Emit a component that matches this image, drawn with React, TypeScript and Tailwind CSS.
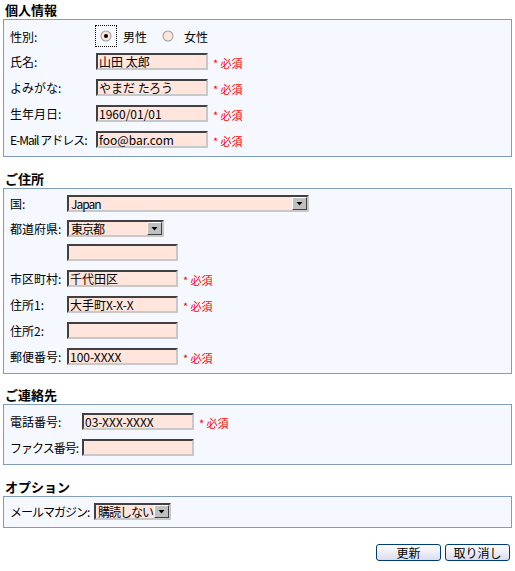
import React from 'react';

const FONT = "font-['Noto_Sans_CJK_JP','Noto_Sans',sans-serif]";

const fieldBase =
  'box-border h-[17px] border-2 border-t-[#404040] border-l-[#404040] border-r-[#c8c8c8] border-b-[#c8c8c8] bg-[#ffe5dc] text-[12px] leading-[13px] text-black';

const Field: React.FC<{ value?: string; w: string }> = ({ value = '', w }) => (
  <div className={`${fieldBase} ${w} whitespace-nowrap pl-px`}>{value}</div>
);

const Select: React.FC<{ value: string; w: string }> = ({ value, w }) => (
  <div className={`${fieldBase} ${w} flex items-start justify-between`}>
    <span className="whitespace-nowrap pl-[2px] tracking-[-1px]">{value}</span>
    <span className="box-border flex h-[13px] w-[15px] shrink-0 items-center justify-center border border-t-white border-l-white border-r-[#404040] border-b-[#404040] bg-[#c0c0c0]">
      <svg width="7" height="4" viewBox="0 0 7 4">
        <path d="M0.5 0h6L3.5 3.5z" fill="#000" />
      </svg>
    </span>
  </div>
);

const Required = () => (
  <span className="ml-[5px] mt-[4px] whitespace-nowrap text-[11px] leading-[13px] text-[#ff0000]">* 必須</span>
);

const Radio: React.FC<{ checked?: boolean }> = ({ checked }) => (
  <svg width="12" height="12" viewBox="0 0 12 12">
    <circle cx="6" cy="6" r="5.5" fill="#9a9a9a" />
    <circle cx="6" cy="6" r="4.5" fill="#fbe6dc" />
    {checked && <circle cx="6" cy="6" r="2" fill="#000" />}
  </svg>
);

const Heading: React.FC<{ children: React.ReactNode }> = ({ children }) => (
  <div className="h-[18px] pl-[5px] text-[13px] font-bold leading-[18px] text-black">{children}</div>
);

const Box: React.FC<{ children: React.ReactNode; className?: string }> = ({ children, className = '' }) => (
  <div className={`mx-[3px] flex flex-col border border-[#7f9db9] bg-[#f5f9ff] pl-[6px] ${className}`}>{children}</div>
);

const Row: React.FC<{ label: string; lw: string; tight?: boolean; children: React.ReactNode; className?: string }> = ({
  label,
  lw,
  tight,
  children,
  className = '',
}) => (
  <div className={`flex items-start ${className}`}>
    <div
      className={`${lw} shrink-0 whitespace-nowrap text-[12px] leading-[17px] text-black ${
        tight ? 'tracking-[-1px]' : ''
      }`}
    >
      {label}
    </div>
    {children}
  </div>
);

export default function App() {
  return (
    <div className={`${FONT} w-[515px] bg-white pt-[1px] text-black`}>
      {/* 個人情報 */}
      <Heading>個人情報</Heading>
      <Box className="pt-[5px] pb-[8px]">
        <div className="flex h-[22px] items-center">
          <div className="w-[85px] shrink-0 text-[12px] leading-[17px]">性別:</div>
          <div className="flex h-[22px] w-[22px] items-center justify-center border border-dotted border-black">
            <Radio checked />
          </div>
          <span className="ml-[6px] text-[12px] leading-[17px]">男性</span>
          <span className="ml-[15px] flex items-center">
            <Radio />
          </span>
          <span className="ml-[10px] text-[12px] leading-[17px]">女性</span>
        </div>
        <Row label="氏名:" lw="w-[86px]" className="mt-[6px]">
          <Field value="山田 太郎" w="w-[112px]" />
          <Required />
        </Row>
        <Row label="よみがな:" lw="w-[86px]" className="mt-[9px]">
          <Field value="やまだ たろう" w="w-[112px]" />
          <Required />
        </Row>
        <Row label="生年月日:" lw="w-[86px]" className="mt-[9px]">
          <Field value="1960/01/01" w="w-[112px]" />
          <Required />
        </Row>
        <Row label="E-Mail アドレス:" lw="w-[86px]" tight className="mt-[9px]">
          <Field value="foo@bar.com" w="w-[112px]" />
          <Required />
        </Row>
      </Box>

      {/* ご住所 */}
      <div className="mt-[13px]">
        <Heading>ご住所</Heading>
      </div>
      <Box className="pt-[6px] pb-[8px]">
        <Row label="国:" lw="w-[57px]">
          <Select value="Japan" w="w-[242px]" />
        </Row>
        <Row label="都道府県:" lw="w-[57px]" className="mt-[8px]">
          <Select value="東京都" w="w-[97px]" />
        </Row>
        <Row label="" lw="w-[57px]" className="mt-[7px]">
          <Field w="w-[111px]" />
        </Row>
        <Row label="市区町村:" lw="w-[57px]" className="mt-[9px]">
          <Field value="千代田区" w="w-[111px]" />
          <Required />
        </Row>
        <Row label="住所1:" lw="w-[57px]" className="mt-[9px]">
          <Field value="大手町X-X-X" w="w-[111px]" />
          <Required />
        </Row>
        <Row label="住所2:" lw="w-[57px]" className="mt-[9px]">
          <Field w="w-[111px]" />
        </Row>
        <Row label="郵便番号:" lw="w-[57px]" className="mt-[9px]">
          <Field value="100-XXXX" w="w-[111px]" />
          <Required />
        </Row>
      </Box>

      {/* ご連絡先 */}
      <div className="mt-[12px]">
        <Heading>ご連絡先</Heading>
      </div>
      <Box className="pt-[8px] pb-[8px]">
        <Row label="電話番号:" lw="w-[72px]">
          <Field value="03-XXX-XXXX" w="w-[112px]" />
          <Required />
        </Row>
        <Row label="ファクス番号:" lw="w-[72px]" tight className="mt-[9px]">
          <Field w="w-[112px]" />
        </Row>
      </Box>

      {/* オプション */}
      <div className="mt-[13px]">
        <Heading>オプション</Heading>
      </div>
      <Box className="pt-[6px] pb-[7px]">
        <Row label="メールマガジン:" lw="w-[84px]" tight>
          <Select value="購読しない" w="w-[77px]" />
        </Row>
      </Box>

      <div className="mt-[16px] flex justify-end gap-[4px] pr-[5px] pb-[10px]">
        {['更新', '取り消し'].map((t) => (
          <button
            key={t}
            className="box-border flex h-[17px] w-[65px] items-center justify-center rounded-[3px] border border-[#003c74] bg-gradient-to-b from-white to-[#dcdcec] text-[12px] leading-[15px] text-black"
          >
            {t}
          </button>
        ))}
      </div>
    </div>
  );
}
